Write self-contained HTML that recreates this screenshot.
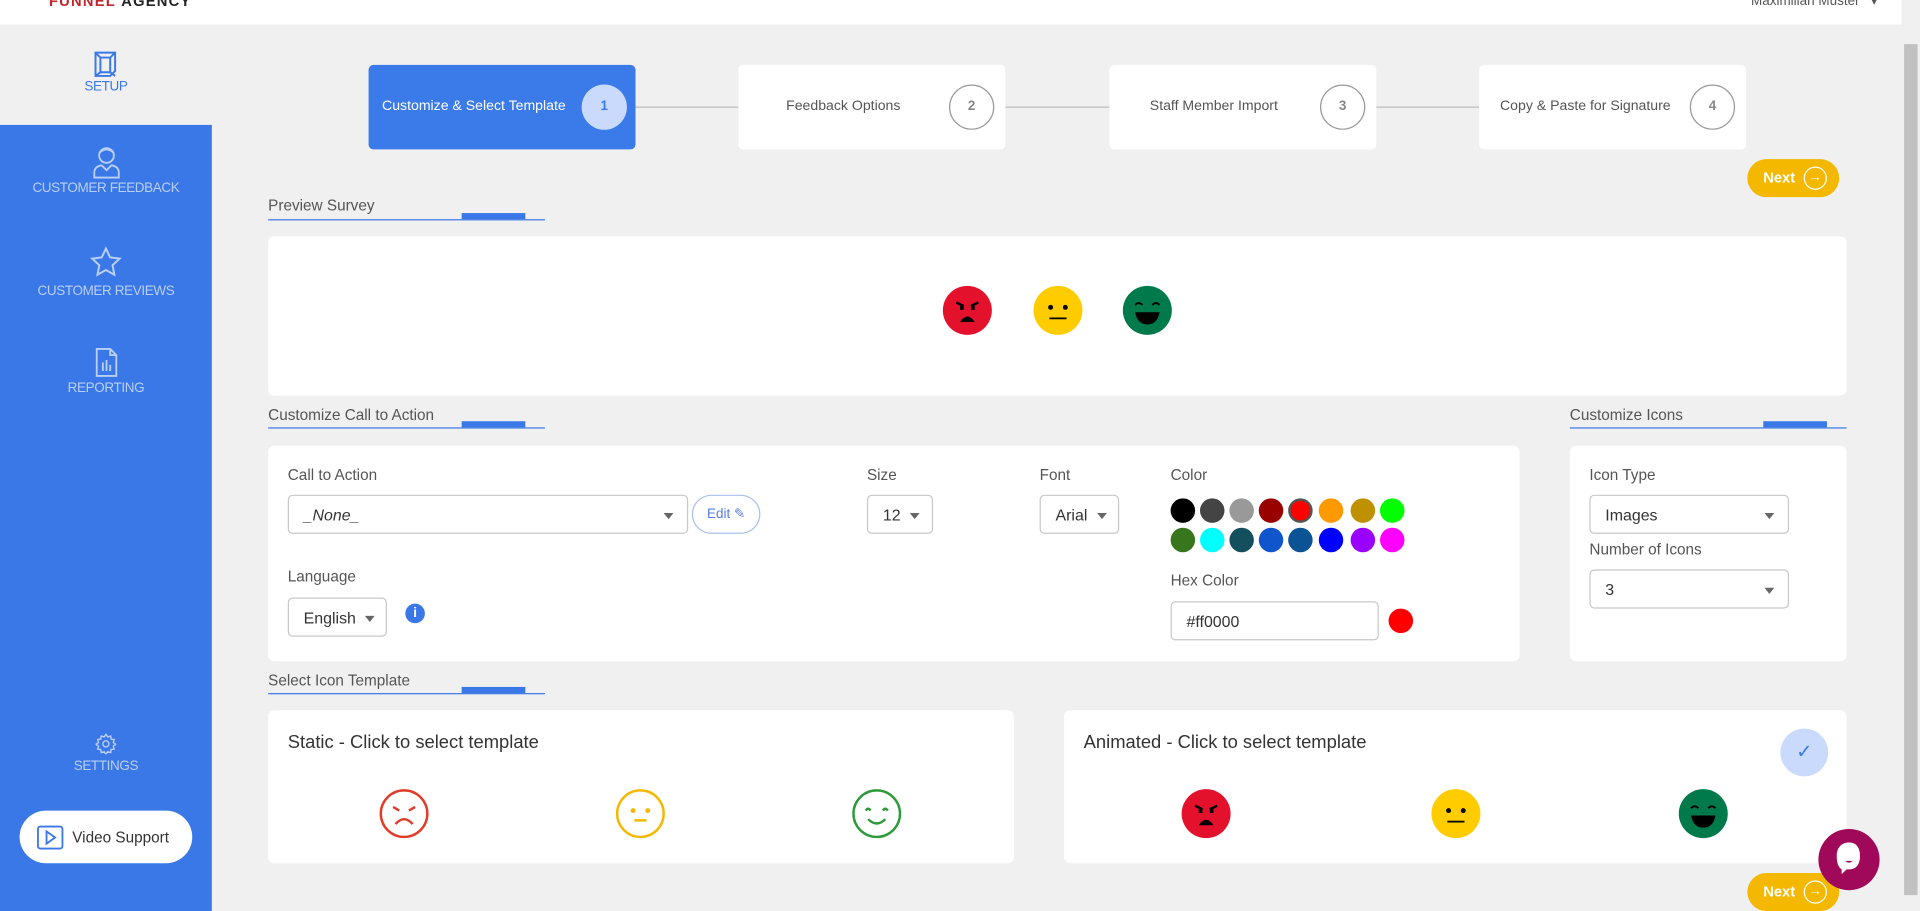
<!DOCTYPE html>
<html><head><meta charset="utf-8"><style>
*{box-sizing:border-box;margin:0;padding:0}
html,body{width:1920px;height:911px;overflow:hidden;background:#f0f0f0;font-family:"Liberation Sans",sans-serif}
#w{position:absolute;left:0;top:0;width:1568px;height:744px;transform:scale(1.22449);transform-origin:0 0;background:#f0f0f0}
.a{position:absolute}
.hdr{left:0;top:0;width:1553px;height:20px;background:#fff}
.sb{left:0;top:102px;width:173px;height:642px;background:#3b78e7}
.nl{position:absolute;width:173px;text-align:center;font-size:11px;color:#b9cff5;letter-spacing:-.3px}
.step{background:#fff;border-radius:4px;height:69px;top:53px;width:218px;font-size:11.5px;color:#555}
.step span{position:absolute;top:28px}
.circ{position:absolute;width:37px;height:37px;border-radius:50%;border:1px solid #999;top:16px;text-align:center;line-height:35px;font-size:11px;color:#888;font-weight:bold}
.card{background:#fff;border-radius:5px}
.ttl{font-size:12.5px;color:#555}
.ul{height:1px;background:#3b78e7}
.ul2{height:5px;background:#3b78e7}
.lbl{font-size:12.5px;color:#555}
.sel{border:1px solid #c8c8c8;border-radius:4px;background:#fff;font-size:13px;color:#333}
.sel span{position:absolute;top:8px;left:12px}
.car{position:absolute;top:14px;width:0;height:0;border-left:4px solid transparent;border-right:4px solid transparent;border-top:5px solid #666}
.sw{position:absolute;width:20px;height:20px;border-radius:50%}
.next{background:#f5b800;border-radius:16px;color:#fff;font-weight:bold;font-size:12px;width:75px;height:31px}
.next b{position:absolute;left:13px;top:8px}
.next i{position:absolute;left:46px;top:6px;width:19px;height:19px;border:1px solid #fff;border-radius:50%;font-style:normal;font-size:11px;text-align:center;line-height:17px}
</style></head><body><div id="w">
<div class="a hdr"></div>
<div class="a" style="left:40px;top:-5px;font-size:12px;font-weight:bold;color:#c0262c;line-height:12px;letter-spacing:1px">FUNNEL<span style="color:#222">&nbsp;AGENCY</span></div>
<div class="a" style="left:1430px;top:-6px;font-size:11px;color:#555">Maximilian Muster&nbsp;&nbsp;&nbsp;▾</div>
<div class="a" style="left:1553px;top:0;width:15px;height:744px;background:#f0f0f0"></div>
<div class="a" style="left:1555px;top:36px;width:11px;height:695px;background:#c1c1c1"></div>

<div class="a sb"></div>
<svg class="a" style="left:74px;top:40px" width="24" height="24" viewBox="0 0 24 24" fill="none" stroke="#3b78e7" stroke-width="1.6"><path d="M4 3h16v15l-4 4H4z M4 3l4 4 8 0 4-4 M8 7v13 M16 7v13 M4 22l4-3h8l4 3"/></svg>
<div class="nl" style="top:65px;color:#3b78e7">SETUP</div>
<svg class="a" style="left:75px;top:118px" width="24" height="28" viewBox="0 0 24 28" fill="none" stroke="#b9cff5" stroke-width="1.5"><circle cx="12" cy="9" r="6"/><path d="M6 7q6-6 12 0 M2 27v-4q0-5 6-6l4 4 4-4q6 1 6 6v4z"/></svg>
<div class="nl" style="top:148px">CUSTOMER FEEDBACK</div>
<svg class="a" style="left:73px;top:201px" width="27" height="26" viewBox="0 0 27 26" fill="none" stroke="#b9cff5" stroke-width="1.6"><path d="M13.5 2l3.4 7.2 7.8 1-5.8 5.4 1.5 7.8-6.9-3.9-6.9 3.9 1.5-7.8L2.3 10.2l7.8-1z"/></svg>
<div class="nl" style="top:232px">CUSTOMER REVIEWS</div>
<svg class="a" style="left:78px;top:284px" width="18" height="24" viewBox="0 0 18 24" fill="none" stroke="#b9cff5" stroke-width="1.5"><path d="M1 1h11l5 5v17H1z M12 1v5h5 M6 19v-7 M9 19v-9 M12 19v-5"/></svg>
<div class="nl" style="top:311px">REPORTING</div>
<svg class="a" style="left:78px;top:599px" width="17" height="17" viewBox="0 0 24 24" fill="none" stroke="#b9cff5" stroke-width="1.6"><circle cx="12" cy="12" r="3.5"/><path d="M12 1l2 3 3.5-1 .5 3.5 3.5.5-1 3.5 3 2-3 2 1 3.5-3.5.5-.5 3.5-3.5-1-2 3-2-3-3.5 1-.5-3.5-3.5-.5 1-3.5-3-2 3-2-1-3.5 3.5-.5.5-3.5 3.5 1z"/></svg>
<div class="nl" style="top:620px">SETTINGS</div>
<div class="a" style="left:16px;top:662px;width:141px;height:43px;background:#fff;border-radius:22px"></div>
<svg class="a" style="left:30px;top:674px" width="22" height="20" viewBox="0 0 22 20" fill="none" stroke="#3b78e7" stroke-width="1.5"><rect x="1" y="1" width="20" height="18" rx="2"/><path d="M8 5v10l7-5z"/></svg>
<div class="a" style="left:59px;top:677px;font-size:12.5px;color:#333">Video Support</div>

<div class="a" style="left:519px;top:87px;width:689px;height:1px;background:#bbb"></div>
<div class="a step" style="left:301px;background:#3b7be9;color:#fff"><span style="left:11px">Customize &amp; Select Template</span><div class="circ" style="left:174px;background:#c9dafc;border:none;color:#3b7be9;line-height:37px">1</div></div>
<div class="a step" style="left:603px"><span style="left:39px">Feedback Options</span><div class="circ" style="left:172px">2</div></div>
<div class="a step" style="left:906px"><span style="left:33px">Staff Member Import</span><div class="circ" style="left:172px">3</div></div>
<div class="a step" style="left:1208px"><span style="left:17px">Copy &amp; Paste for Signature</span><div class="circ" style="left:172px">4</div></div>
<div class="a next" style="left:1427px;top:130px"><b>Next</b><i>→</i></div>

<div class="a ttl" style="left:219px;top:161px">Preview Survey</div>
<div class="a ul" style="left:219px;top:179px;width:226px"></div>
<div class="a ul2" style="left:377px;top:174px;width:52px"></div>
<div class="a card" style="left:219px;top:193px;width:1289px;height:130px"></div>
<svg class="a" style="left:769px;top:233px" width="210" height="41" viewBox="0 0 210 41">
<g transform="translate(1,0)"><circle cx="20" cy="20.5" r="20" fill="#e4112d"/><path d="M11 14l6 3 M29 14l-6 3" stroke="#000" stroke-width="2"/><rect x="14" y="17" width="3" height="3" fill="#000"/><rect x="23" y="17" width="3" height="3" fill="#000"/><path d="M14 30q6-9 12 0z" fill="#000"/></g>
<g transform="translate(75,0)"><circle cx="20" cy="20.5" r="20" fill="#ffcc00"/><circle cx="14" cy="18" r="2" fill="#000"/><circle cx="26" cy="18" r="2" fill="#000"/><path d="M13 27h14" stroke="#000" stroke-width="1.5"/></g>
<g transform="translate(148,0)"><circle cx="20" cy="20.5" r="20" fill="#007a4b"/><path d="M10 16q3-3 6 0 M24 16q3-3 6 0" stroke="#000" stroke-width="1.5" fill="none"/><path d="M10 22h20q-2 10-10 10t-10-10z" fill="#000"/></g>
</svg>

<div class="a ttl" style="left:219px;top:332px">Customize Call to Action</div>
<div class="a ul" style="left:219px;top:349px;width:226px"></div>
<div class="a ul2" style="left:377px;top:344px;width:52px"></div>
<div class="a card" style="left:219px;top:364px;width:1022px;height:176px"></div>
<div class="a lbl" style="left:235px;top:381px">Call to Action</div>
<div class="a sel" style="left:235px;top:404px;width:327px;height:32px"><span style="font-style:italic">_None_</span><div class="car" style="left:306px"></div></div>
<div class="a" style="left:565px;top:404px;width:56px;height:32px;border:1px solid #a9bff0;border-radius:16px;font-size:11px;color:#5b7be0;text-align:center;line-height:30px">Edit ✎</div>
<div class="a lbl" style="left:708px;top:381px">Size</div>
<div class="a sel" style="left:708px;top:404px;width:54px;height:32px"><span>12</span><div class="car" style="left:34px"></div></div>
<div class="a lbl" style="left:849px;top:381px">Font</div>
<div class="a sel" style="left:849px;top:404px;width:65px;height:32px"><span>Arial</span><div class="car" style="left:46px"></div></div>
<div class="a lbl" style="left:956px;top:381px">Color</div>
<div class="sw" style="left:956px;top:407px;background:#000"></div>
<div class="sw" style="left:980px;top:407px;background:#444"></div>
<div class="sw" style="left:1004px;top:407px;background:#999"></div>
<div class="sw" style="left:1028px;top:407px;background:#990000"></div>
<div class="sw" style="left:1052px;top:407px;background:#ff0000;border:2px solid #555"></div>
<div class="sw" style="left:1077px;top:407px;background:#ff9900"></div>
<div class="sw" style="left:1103px;top:407px;background:#bf9000"></div>
<div class="sw" style="left:1127px;top:407px;background:#00ff00"></div>
<div class="sw" style="left:956px;top:431px;background:#38761d"></div>
<div class="sw" style="left:980px;top:431px;background:#00ffff"></div>
<div class="sw" style="left:1004px;top:431px;background:#134f5c"></div>
<div class="sw" style="left:1028px;top:431px;background:#1155cc"></div>
<div class="sw" style="left:1052px;top:431px;background:#0b5394"></div>
<div class="sw" style="left:1077px;top:431px;background:#0000ff"></div>
<div class="sw" style="left:1103px;top:431px;background:#9900ff"></div>
<div class="sw" style="left:1127px;top:431px;background:#ff00ff"></div>
<div class="a lbl" style="left:956px;top:467px">Hex Color</div>
<div class="a sel" style="left:956px;top:491px;width:170px;height:32px"><span>#ff0000</span></div>
<div class="sw" style="left:1134px;top:497px;background:#ff0000"></div>
<div class="a lbl" style="left:235px;top:464px">Language</div>
<div class="a sel" style="left:235px;top:488px;width:81px;height:32px"><span>English</span><div class="car" style="left:62px"></div></div>
<div class="a" style="left:331px;top:493px;width:16px;height:16px;border-radius:50%;background:#3b78e7;color:#fff;font-size:11px;font-weight:bold;text-align:center;line-height:16px">i</div>

<div class="a ttl" style="left:1282px;top:332px">Customize Icons</div>
<div class="a ul" style="left:1282px;top:349px;width:226px"></div>
<div class="a ul2" style="left:1440px;top:344px;width:52px"></div>
<div class="a card" style="left:1282px;top:364px;width:226px;height:176px"></div>
<div class="a lbl" style="left:1298px;top:381px">Icon Type</div>
<div class="a sel" style="left:1298px;top:404px;width:163px;height:32px"><span>Images</span><div class="car" style="left:142px"></div></div>
<div class="a lbl" style="left:1298px;top:442px">Number of Icons</div>
<div class="a sel" style="left:1298px;top:465px;width:163px;height:32px"><span>3</span><div class="car" style="left:142px"></div></div>

<div class="a ttl" style="left:219px;top:549px">Select Icon Template</div>
<div class="a ul" style="left:219px;top:566px;width:226px"></div>
<div class="a ul2" style="left:377px;top:561px;width:52px"></div>
<div class="a card" style="left:219px;top:580px;width:609px;height:125px"></div>
<div class="a" style="left:235px;top:598px;font-size:15px;color:#333">Static - Click to select template</div>
<svg class="a" style="left:309px;top:644px" width="430" height="42" viewBox="0 0 430 42" fill="none" stroke-width="2">
<g stroke="#e03c2a" transform="translate(2,1)"><circle cx="19" cy="19.5" r="19"/><path d="M10 14l5 3 M28 14l-5 3 M12 28q7-8 14 0" /></g>
<g stroke="#f5b800" transform="translate(195,1)"><circle cx="19" cy="19.5" r="19"/><circle cx="13" cy="17" r="1" fill="#f5b800"/><circle cx="25" cy="17" r="1" fill="#f5b800"/><path d="M14 25h10"/></g>
<g stroke="#2e9a3a" transform="translate(388,1)"><circle cx="19" cy="19.5" r="19"/><path d="M10 17q2-3 4 0 M24 17q2-3 4 0 M12 24q7 7 14 0"/></g>
</svg>
<div class="a card" style="left:869px;top:580px;width:639px;height:125px"></div>
<div class="a" style="left:885px;top:598px;font-size:15px;color:#333">Animated - Click to select template</div>
<div class="a" style="left:1454px;top:595px;width:39px;height:39px;border-radius:50%;background:#c9dafc;color:#3b7be9;font-size:16px;text-align:center;line-height:39px">✓</div>
<svg class="a" style="left:964px;top:644px" width="470" height="42" viewBox="0 0 470 42">
<g><circle cx="21" cy="20.5" r="20" fill="#e4112d"/><path d="M12 14l6 3 M30 14l-6 3" stroke="#000" stroke-width="2"/><rect x="15" y="17" width="3" height="3" fill="#000"/><rect x="24" y="17" width="3" height="3" fill="#000"/><path d="M15 30q6-9 12 0z" fill="#000"/></g>
<g transform="translate(204,0)"><circle cx="21" cy="20.5" r="20" fill="#ffcc00"/><circle cx="15" cy="18" r="2" fill="#000"/><circle cx="27" cy="18" r="2" fill="#000"/><path d="M14 27h14" stroke="#000" stroke-width="1.5"/></g>
<g transform="translate(406,0)"><circle cx="21" cy="20.5" r="20" fill="#007a4b"/><path d="M11 16q3-3 6 0 M25 16q3-3 6 0" stroke="#000" stroke-width="1.5" fill="none"/><path d="M11 22h20q-2 10-10 10t-10-10z" fill="#000"/></g>
</svg>

<div class="a next" style="left:1427px;top:713px"><b>Next</b><i>→</i></div>
<div class="a" style="left:1485px;top:677px;width:50px;height:50px;border-radius:50%;background:#a0095a"></div>
<svg class="a" style="left:1497px;top:686px" width="26" height="32" viewBox="0 0 26 32"><path d="M13 2c6 0 9 4 9 11s-3 11-9 11h-2l-4 4v-4c-3-2-4-6-4-11C3 6 7 2 13 2z" fill="#fff"/><path d="M10 17q3 3 6 0z" fill="#a0095a"/></svg>
</div></body></html>
